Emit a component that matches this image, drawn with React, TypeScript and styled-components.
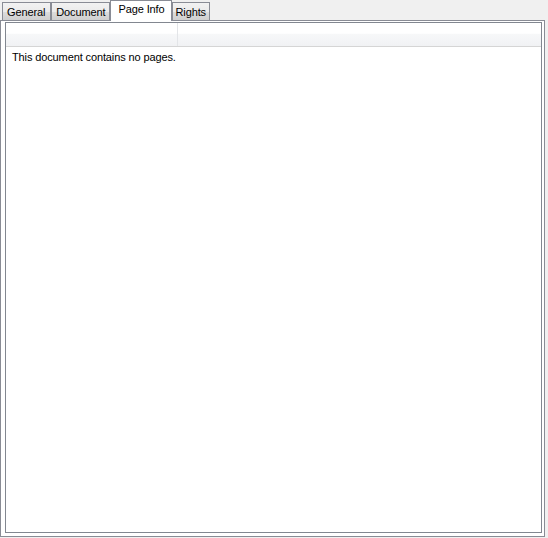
import React from "react";
import styled, { createGlobalStyle } from "styled-components";

const Global = createGlobalStyle`
  html, body { margin: 0; padding: 0; background: #f0f0f0; }
  body {
    font-family: "Liberation Sans", Arial, sans-serif;
    font-size: 11px;
    letter-spacing: -0.12px;
    color: #000;
  }
`;

const Window = styled.div`
  width: 548px;
  height: 538px;
  box-sizing: border-box;
  padding: 0 3px 1px 0;
  display: flex;
  flex-direction: column;
  background: #f0f0f0;
`;

const TabBar = styled.div`
  display: flex;
  align-items: flex-end;
  height: 21px;
  padding-left: 2px;
  position: relative;
  z-index: 1;
  margin-bottom: -1px;
`;

const Tab = styled.div<{ $active?: boolean; $padL: number; $padR: number }>`
  box-sizing: border-box;
  height: ${(p) => (p.$active ? "21px" : "19px")};
  padding: ${(p) => (p.$active ? "2px" : "3px")} ${(p) => p.$padR}px 0 ${(p) => p.$padL}px;
  border: 1px solid #898c95;
  border-bottom: ${(p) => (p.$active ? "none" : "1px solid #898c95")};
  background: ${(p) =>
    p.$active ? "#ffffff" : "linear-gradient(#f2f2f2, #ebebeb 50%, #dddddd 51%, #cfcfcf)"};
  line-height: 13px;
  white-space: nowrap;
`;

const Panel = styled.div`
  flex: 1;
  box-sizing: border-box;
  border: 1px solid #898c95;
  background: #ffffff;
  padding: 1px 2px 3px 4px;
  display: flex;
`;

const ListBox = styled.div`
  flex: 1;
  box-sizing: border-box;
  border: 1px solid #828790;
  background: #ffffff;
  display: flex;
  flex-direction: column;
`;

const Header = styled.div`
  display: flex;
  height: 24px;
  box-sizing: border-box;
  border-bottom: 1px solid #d5d5d5;
  background: linear-gradient(#ffffff 0%, #ffffff 45%, #f7f8f9 48%, #f1f2f4 100%);
`;

const HeaderCell = styled.div<{ $w?: number }>`
  box-sizing: border-box;
  ${(p) => (p.$w ? `width: ${p.$w}px;` : "flex: 1;")}
  border-right: 1px solid #e3e5e8;
  &:last-child { border-right: none; }
`;

const Message = styled.div`
  padding: 4px 0 0 6px;
  line-height: 13px;
`;

export default function App() {
  return (
    <>
      <Global />
      <Window>
        <TabBar>
          <Tab $padL={4} $padR={5}>General</Tab>
          <Tab $padL={4} $padR={4}>Document</Tab>
          <Tab $active $padL={7} $padR={6}>Page Info</Tab>
          <Tab $padL={3} $padR={3}>Rights</Tab>
        </TabBar>
        <Panel>
          <ListBox>
            <Header>
              <HeaderCell $w={172} />
              <HeaderCell />
            </Header>
            <Message>This document contains no pages.</Message>
          </ListBox>
        </Panel>
      </Window>
    </>
  );
}
